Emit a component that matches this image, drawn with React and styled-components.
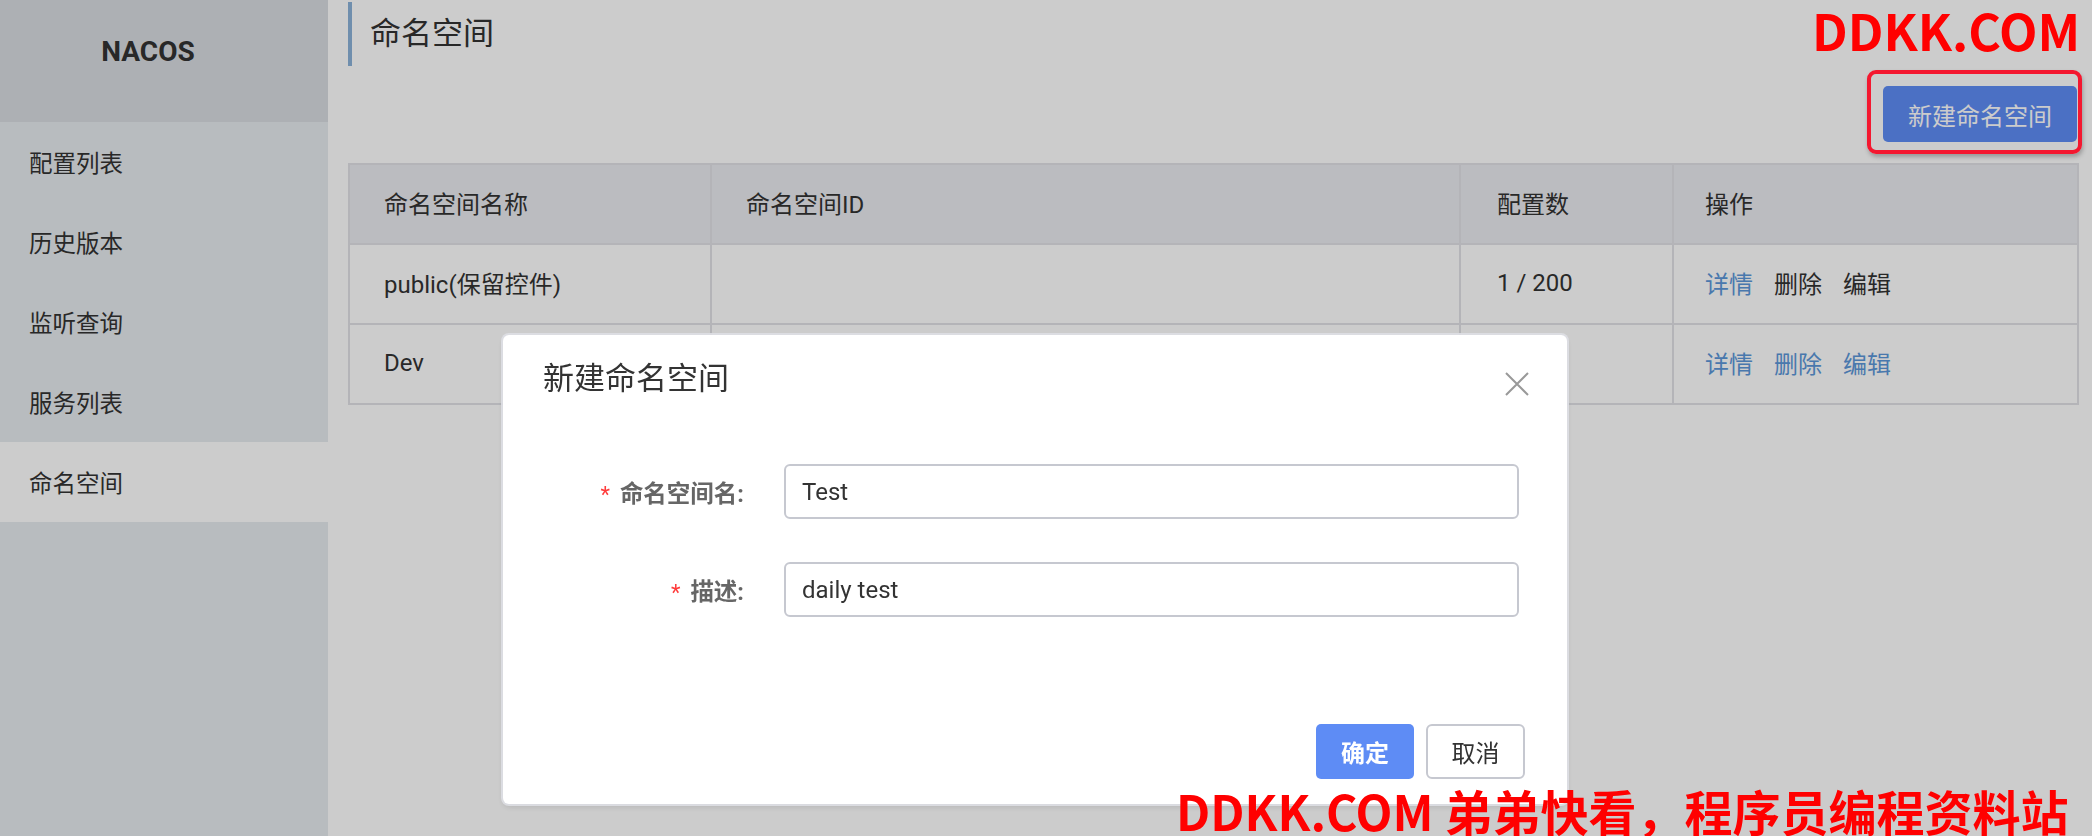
import React from "react";
import styled, { createGlobalStyle } from "styled-components";

const GlobalStyle = createGlobalStyle`
  html, body { margin: 0; padding: 0; width: 100%; height: 100%; overflow: hidden; }
  body {
    font-family: Roboto, "Noto Sans CJK SC", "Noto Sans", sans-serif;
    color: #333;
    background: #fff;
  }
  #root { height: 100%; }
  * { box-sizing: border-box; }
`;

const Layout = styled.div`
  display: flex;
  width: 2092px;
  height: 836px;
  background: #fff;
`;

const Sidebar = styled.aside`
  width: 328px;
  flex-shrink: 0;
  background: #e7ebef;
  display: flex;
  flex-direction: column;
`;

const Brand = styled.div`
  height: 122px;
  background: #d9dde2;
  padding: 34px 32px 0 0;
  text-align: center;
  font-weight: 700;
  font-size: 28px;
  line-height: 36px;
  color: #333;
`;

const MenuItem = styled.div`
  height: 80px;
  display: flex;
  align-items: center;
  padding-left: 29px;
  font-size: 23.5px;
  color: #333;
  background: ${(p) => (p.$active ? "#fff" : "transparent")};
`;

const Main = styled.main`
  flex: 1;
  padding: 2px 14px 0 20px;
  display: flex;
  flex-direction: column;
  min-width: 0;
`;

const PageTitle = styled.h1`
  margin: 0;
  height: 64px;
  border-left: 4px solid #8bb2d9;
  padding-left: 18px;
  font-size: 31px;
  font-weight: 400;
  line-height: 64px;
  color: #333;
`;

const Toolbar = styled.div`
  display: flex;
  justify-content: flex-end;
  padding: 20px 1px 21px 0;
`;

const AnnotatedWrap = styled.div`
  position: relative;
  display: flex;
`;

const Annotation = styled.div`
  position: absolute;
  left: -16px;
  right: -5px;
  top: -16px;
  bottom: -12px;
  border: 4px solid #f4172f;
  border-radius: 9px;
  box-shadow: 1px 3px 4px rgba(0, 0, 0, 0.25);
  z-index: 25;
  pointer-events: none;
`;

const PrimaryButton = styled.button`
  width: ${(p) => p.$w || 194}px;
  height: ${(p) => p.$h || 56}px;
  border: none;
  border-radius: 5px;
  background: #5e8cf5;
  color: #fff;
  font-family: inherit;
  font-size: 24px;
  font-weight: ${(p) => (p.$bold ? 700 : 400)};
  padding: 0;
  cursor: pointer;
`;

const GhostButton = styled.button`
  width: 99px;
  height: 55px;
  border: 2px solid #c6c8d0;
  border-radius: 6px;
  background: #fff;
  color: #333;
  font-family: inherit;
  font-size: 24px;
  padding: 0;
  cursor: pointer;
`;

const Table = styled.table`
  width: 1729px;
  border-collapse: collapse;
  table-layout: fixed;
  font-size: 24px;
  color: #333;
`;

const Th = styled.th`
  height: 80px;
  background: #eaebf0;
  border: 2px solid #e1e2e7;
  text-align: left;
  font-weight: 400;
  padding: 0 0 3px ${(p) => p.$pl || 34}px;
`;

const Td = styled.td`
  height: 80px;
  border: 2px solid #e1e2e7;
  padding: 0 0 3px ${(p) => p.$pl || 34}px;
`;

const Actions = styled.div`
  display: flex;
  gap: 21px;
`;

const ActionLink = styled.span`
  color: ${(p) => (p.$link ? "#5c97d9" : "#333")};
  cursor: pointer;
`;

const Overlay = styled.div`
  position: fixed;
  inset: 0;
  background: rgba(0, 0, 0, 0.2);
  z-index: 10;
`;

const Modal = styled.div`
  position: fixed;
  left: 503px;
  top: 335px;
  width: 1064px;
  height: 469px;
  background: #fff;
  border-radius: 6px;
  box-shadow: 0 0 0 2px rgba(222, 223, 228, 0.9), 0 3px 6px rgba(0, 0, 0, 0.12);
  padding: 22px 38px 25px 40px;
  display: flex;
  flex-direction: column;
  z-index: 20;
`;

const ModalHeader = styled.div`
  display: flex;
  justify-content: space-between;
  align-items: center;
  height: 43px;
`;

const ModalTitle = styled.div`
  font-size: 31px;
  line-height: 43px;
  color: #333;
`;

const CloseBtn = styled.span`
  display: flex;
  width: 24px;
  height: 24px;
  margin-top: 10px;
  cursor: pointer;
`;

const Form = styled.div`
  margin-top: 64px;
  display: flex;
  flex-direction: column;
  gap: 43px;
`;

const FormRow = styled.div`
  display: grid;
  grid-template-columns: 241px 735px;
  align-items: center;
`;

const Label = styled.label`
  text-align: right;
  padding-right: 40px;
  font-size: 23.5px;
  font-weight: 700;
  color: #666;
  white-space: nowrap;
`;

const Required = styled.span`
  color: #ff3b3b;
  margin-right: 10px;
  font-size: 22px;
  font-weight: 400;
`;

const Input = styled.input`
  height: 55px;
  width: 100%;
  border: 2px solid #c6c8d0;
  border-radius: 6px;
  padding: 0 16px;
  font-family: inherit;
  font-size: 24px;
  color: #333;
  outline: none;
`;

const Footer = styled.div`
  margin-top: auto;
  display: flex;
  justify-content: flex-end;
  gap: 12px;
  padding-right: 4px;
`;

const Watermark = styled.div`
  position: fixed;
  z-index: 30;
  color: #ff0000;
  font-family: "Noto Sans CJK SC", "Noto Sans", sans-serif;
  font-weight: 700;
  line-height: 1;
  white-space: nowrap;
  left: ${(p) => p.$left}px;
  top: ${(p) => p.$top}px;
  font-size: ${(p) => p.$size}px;
`;

const menu = ["配置列表", "历史版本", "监听查询", "服务列表", "命名空间"];

const rows = [
  { name: "public(保留控件)", id: "", count: "1 / 200", editable: false },
  { name: "Dev", id: "", count: "", editable: true },
];

export default function App() {
  return (
    <>
      <GlobalStyle />
      <Layout>
        <Sidebar>
          <Brand>NACOS</Brand>
          {menu.map((m) => (
            <MenuItem key={m} $active={m === "命名空间"}>
              {m}
            </MenuItem>
          ))}
        </Sidebar>
        <Main>
          <PageTitle>命名空间</PageTitle>
          <Toolbar>
            <AnnotatedWrap>
              <PrimaryButton>新建命名空间</PrimaryButton>
              <Annotation />
            </AnnotatedWrap>
          </Toolbar>
          <Table>
            <colgroup>
              <col style={{ width: 362 }} />
              <col style={{ width: 749 }} />
              <col style={{ width: 213 }} />
              <col style={{ width: 405 }} />
            </colgroup>
            <thead>
              <tr>
                <Th>命名空间名称</Th>
                <Th>命名空间ID</Th>
                <Th $pl={36}>配置数</Th>
                <Th $pl={31}>操作</Th>
              </tr>
            </thead>
            <tbody>
              {rows.map((r) => (
                <tr key={r.name}>
                  <Td>{r.name}</Td>
                  <Td>{r.id}</Td>
                  <Td $pl={36}>{r.count}</Td>
                  <Td $pl={31}>
                    <Actions>
                      <ActionLink $link>详情</ActionLink>
                      <ActionLink $link={r.editable}>删除</ActionLink>
                      <ActionLink $link={r.editable}>编辑</ActionLink>
                    </Actions>
                  </Td>
                </tr>
              ))}
            </tbody>
          </Table>
        </Main>
      </Layout>
      <Overlay />
      <Modal>
        <ModalHeader>
          <ModalTitle>新建命名空间</ModalTitle>
          <CloseBtn>
            <svg width="24" height="24" viewBox="0 0 24 24">
              <path d="M1 1 L23 23 M23 1 L1 23" stroke="#999" strokeWidth="2" fill="none" />
            </svg>
          </CloseBtn>
        </ModalHeader>
        <Form>
          <FormRow>
            <Label>
              <Required>*</Required>命名空间名:
            </Label>
            <Input value="Test" readOnly />
          </FormRow>
          <FormRow>
            <Label>
              <Required>*</Required>描述:
            </Label>
            <Input value="daily test" readOnly />
          </FormRow>
        </Form>
        <Footer>
          <PrimaryButton $w={98} $h={55} $bold>确定</PrimaryButton>
          <GhostButton>取消</GhostButton>
        </Footer>
      </Modal>
      <Watermark $left={1812} $top={4} $size={50}>DDKK.COM</Watermark>
      <Watermark $left={1176} $top={786} $size={48}>DDKK.COM 弟弟快看，程序员编程资料站</Watermark>
    </>
  );
}
